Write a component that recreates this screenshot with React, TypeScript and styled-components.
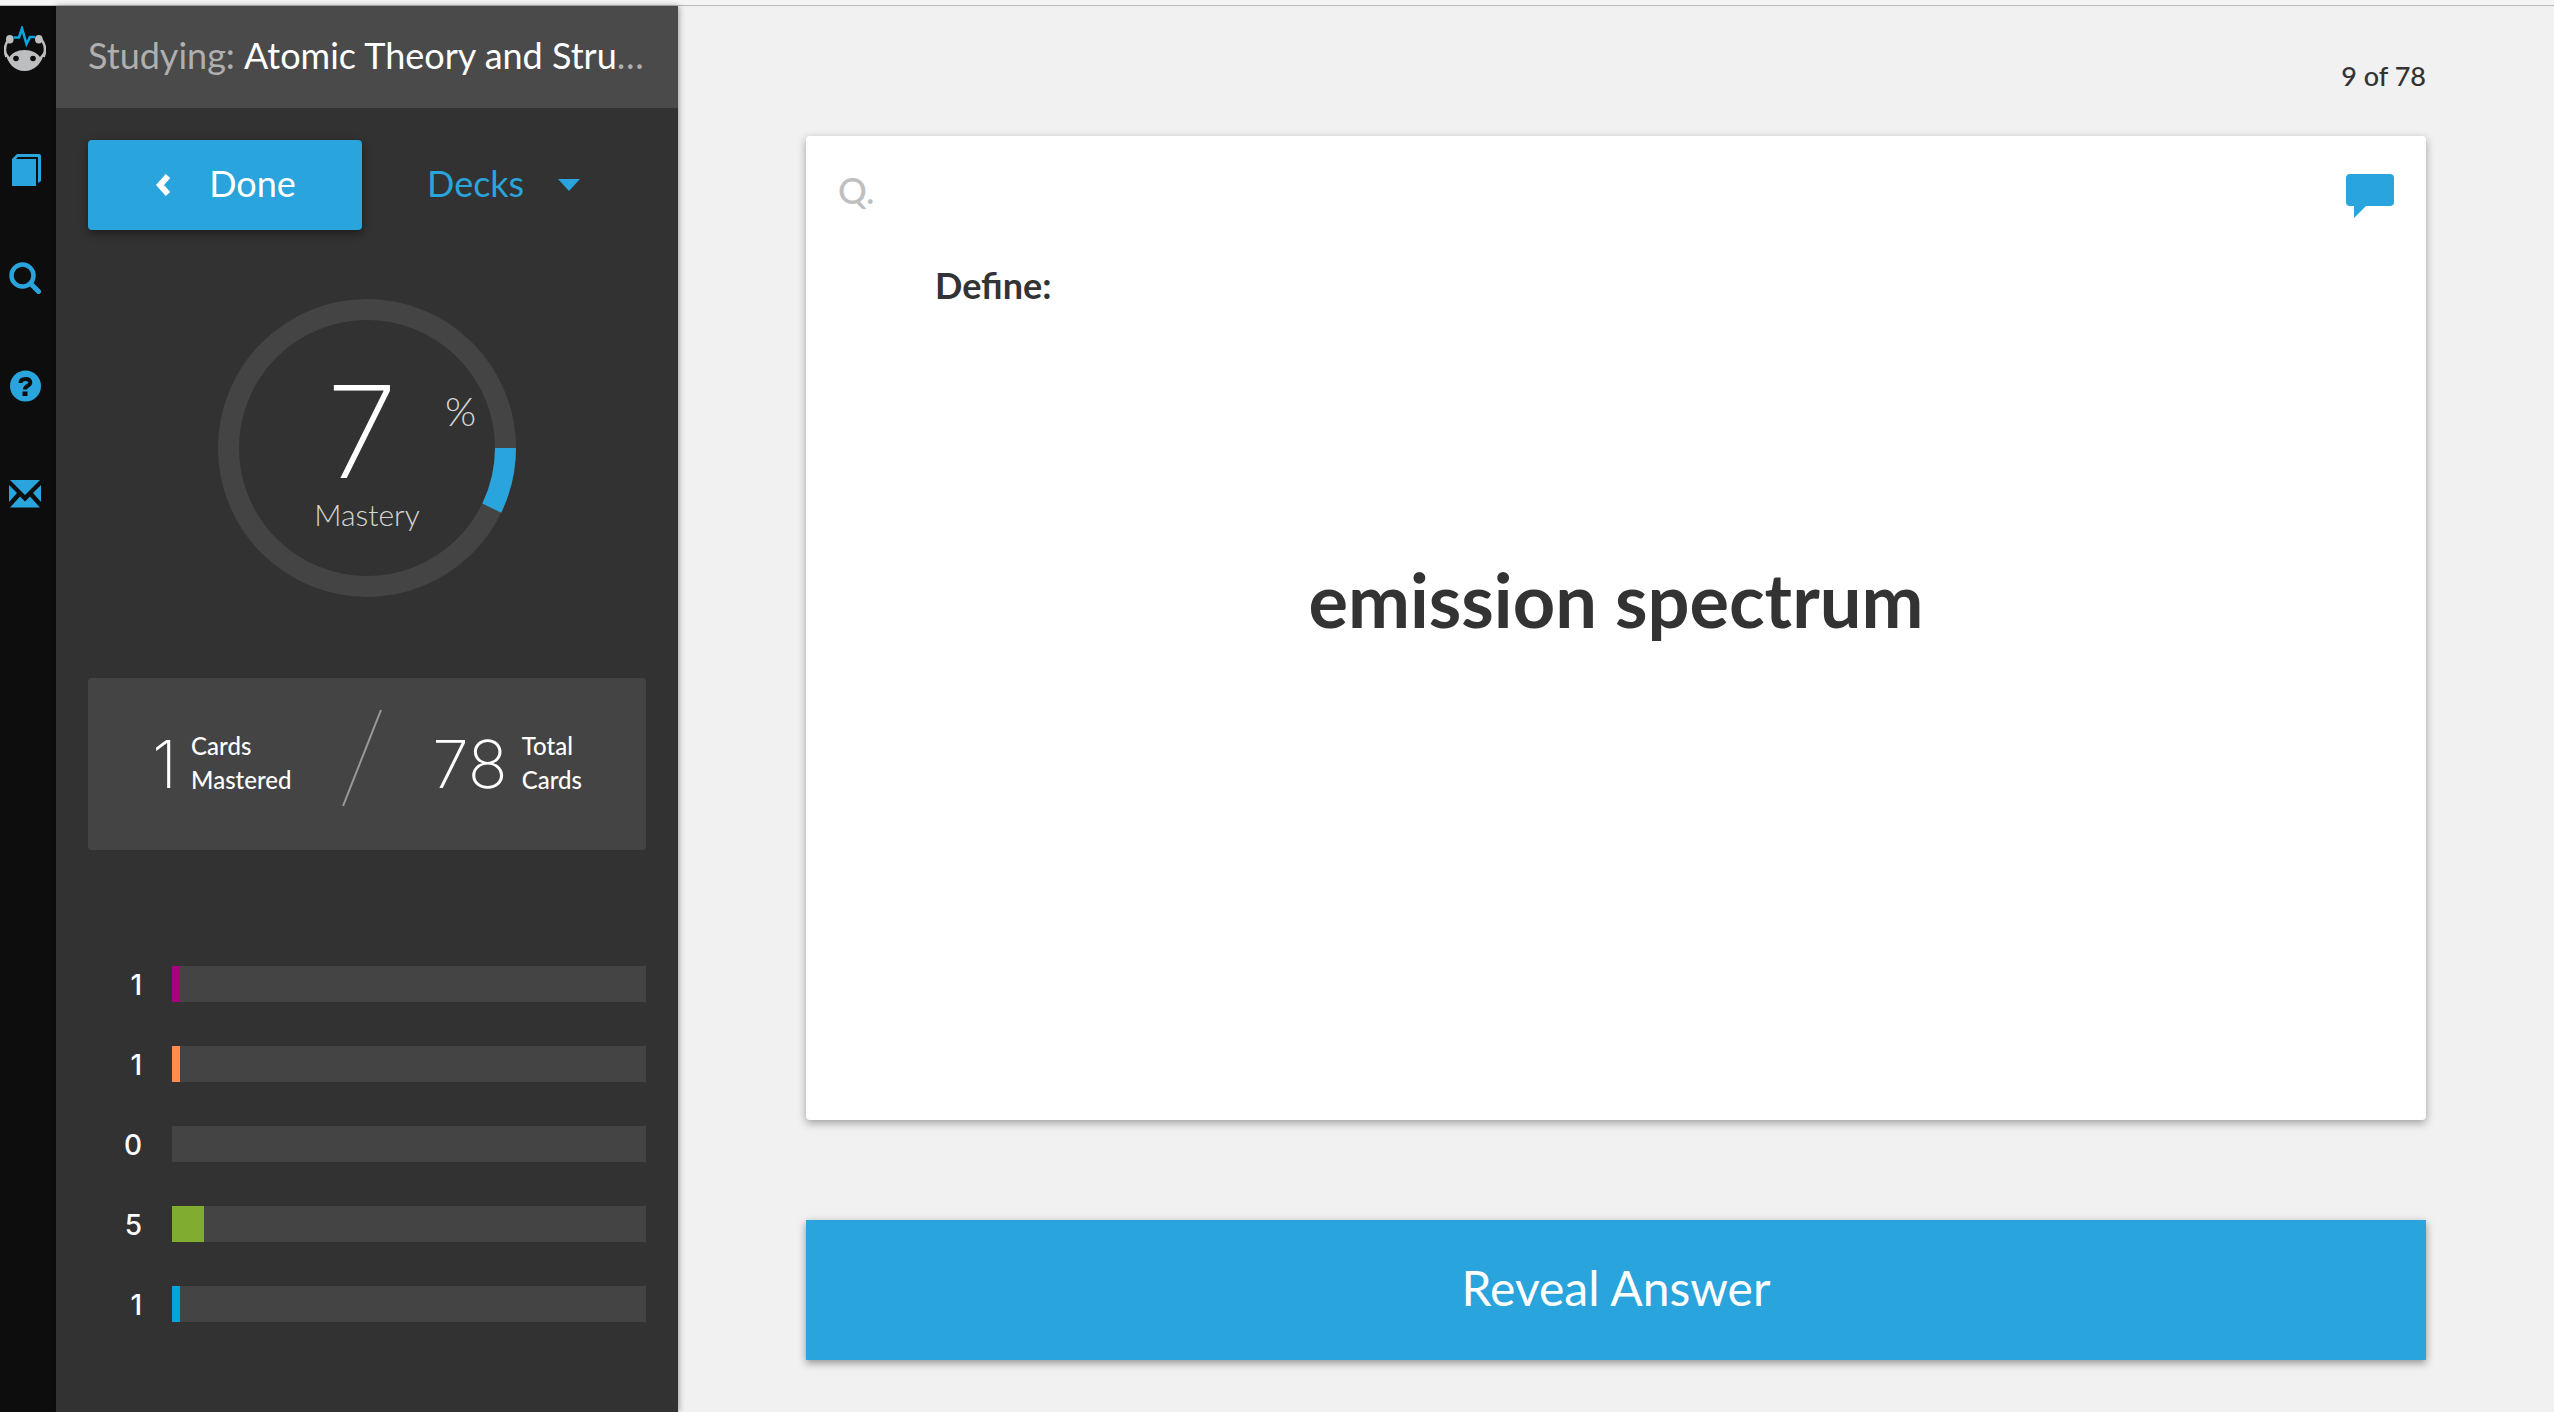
import React from "react";
import styled, { createGlobalStyle } from "styled-components";

const blue = "#29a4dc";
const digits = `Inter, Lato, "Liberation Sans", sans-serif`;

const GlobalStyle = createGlobalStyle`
  *, *::before, *::after { box-sizing: border-box; }
  body { margin: 0; background: #f1f1f1; }
  body, button { font-family: Lato, "Liberation Sans", sans-serif; }
  button { border: 0; padding: 0; margin: 0; background: none; cursor: pointer; }
  h1, h2, p { margin: 0; }
  svg { display: block; }
`;

const Page = styled.div`
  min-height: 100vh;
  display: flex;
  flex-direction: column;
`;

const TopStrip = styled.div`
  height: 6px;
  background: #f5f5f5;
  border-bottom: 1px solid #b9bdb9;
`;

const Columns = styled.div`
  flex: 1;
  display: flex;
`;

const Rail = styled.nav`
  width: 56px;
  flex: none;
  background: #0d0d0d;
  padding: 20px 0 0 4px;
  display: flex;
  flex-direction: column;
  align-items: flex-start;
`;

const LogoLink = styled.a`
  display: block;
  height: 45px;
  margin-bottom: 83px;
`;

const RailLinks = styled.div`
  display: flex;
  flex-direction: column;
  gap: 76px;
  padding-left: 5px;
`;

const RailLink = styled.a`
  display: block;
  width: 32px;
  height: 32px;
  color: ${blue};
`;

const Sidebar = styled.aside`
  width: 622px;
  flex: none;
  background: #323232;
  color: #fff;
  box-shadow: 1px 0 6px rgba(0, 0, 0, 0.35);
  z-index: 1;
`;

const DeckTitle = styled.h1`
  height: 102px;
  padding: 0 32px 4px;
  display: flex;
  align-items: center;
  background: #4a4a4a;
  color: #afafaf;
  font-size: 36px;
  line-height: 44px;
  font-weight: 400;
  white-space: pre;
  span { color: #fff; }
`;

const SidebarBody = styled.div`
  padding: 32px 32px 0;
`;

const Actions = styled.div`
  display: flex;
  gap: 65px;
`;

const DoneButton = styled.button`
  width: 274px;
  height: 90px;
  display: flex;
  align-items: center;
  justify-content: center;
  gap: 38px;
  border-radius: 4px;
  background: ${blue};
  color: #fff;
  font-size: 36px;
  line-height: 44px;
  box-shadow: 0 3px 8px rgba(0, 0, 0, 0.45);
`;

const DecksButton = styled.button`
  height: 90px;
  display: flex;
  align-items: center;
  gap: 34px;
  color: ${blue};
  font-size: 36px;
  line-height: 44px;
`;

const ButtonLabel = styled.span`
  padding-bottom: 4px;
`;

const Ring = styled.div`
  display: grid;
  width: 298px;
  height: 298px;
  margin: 69px auto 0;
  > * { grid-area: 1 / 1; }
`;

const RingText = styled.div`
  display: grid;
  grid-template-columns: 1fr 80px 1fr;
  grid-template-rows: 128px 40px;
  padding-top: 69px;
  justify-items: center;
  align-content: start;
`;

const Score = styled.strong`
  grid-column: 2;
  padding-right: 10px;
  font-family: ${digits};
  font-size: 128px;
  line-height: 128px;
  font-weight: 200;
`;

const Percent = styled.span`
  grid-column: 3;
  font-size: 40px;
  line-height: 48px;
  padding: 19px 2px 0 0;
  font-weight: 300;
  color: #d6d6d6;
`;

const RingLabel = styled.span`
  grid-column: 1 / -1;
  font-size: 30px;
  line-height: 36px;
  font-weight: 300;
  color: #d6d6d6;
`;

const Totals = styled.section`
  height: 172px;
  margin-top: 81px;
  padding: 32px 64px 0;
  border-radius: 4px;
  background: #444;
  display: flex;
  justify-content: space-between;
  align-items: flex-start;
`;

const Total = styled.div`
  display: flex;
  gap: 14px;
  padding-top: 19px;
`;

const TotalNumber = styled.span`
  font-family: ${digits};
  font-size: 66px;
  line-height: 70px;
  font-weight: 200;
`;

const TotalLabel = styled.span`
  font-size: 24px;
  line-height: 34px;
  font-weight: 500;
`;

const Ratings = styled.ul`
  list-style: none;
  margin: 116px 0 0;
  padding: 0;
  display: grid;
  gap: 44px;
`;

const Rating = styled.li`
  display: grid;
  grid-template-columns: 54px 1fr;
  column-gap: 30px;
  height: 36px;
  font-family: ${digits};
  font-size: 28px;
  line-height: 38px;
  font-weight: 500;
  text-align: right;
`;

const Track = styled.div`
  height: 36px;
  background: #444;
`;

const Fill = styled.div<{ $color: string }>`
  height: 100%;
  background: ${(p) => p.$color};
`;

const Main = styled.main`
  flex: 1;
  min-width: 0;
  padding: 52px 128px 52px;
  display: flex;
  flex-direction: column;
  color: #333;
`;

const Progress = styled.p`
  height: 78px;
  text-align: right;
  font-size: 27px;
  line-height: 36px;
  font-weight: 500;
`;

const Card = styled.article`
  flex: 1;
  background: #fff;
  border-radius: 4px;
  box-shadow: 0 3px 8px rgba(0, 0, 0, 0.35);
  padding: 36px 32px;
`;

const CardTop = styled.div`
  display: flex;
  justify-content: space-between;
  height: 76px;
`;

const Side = styled.span`
  font-size: 36px;
  line-height: 36px;
  font-weight: 500;
  color: #bfbfbf;
`;

const CommentButton = styled.button`
  width: 48px;
  height: 46px;
  padding-top: 2px;
`;

const Prompt = styled.p`
  padding: 15px 97px 0;
  font-size: 36px;
  line-height: 44px;
  font-weight: 700;
`;

const Term = styled.h2`
  margin-top: 249px;
  text-align: center;
  font-size: 74px;
  line-height: 88px;
  font-weight: 700;
`;

const RevealButton = styled.button`
  height: 140px;
  margin-top: 100px;
  padding-bottom: 4px;
  background: ${blue};
  color: #fff;
  font-size: 48px;
  line-height: 60px;
  box-shadow: 0 3px 8px rgba(0, 0, 0, 0.4);
`;

const Logo = () => (
  <svg width="42" height="45" viewBox="0 0 42 45" aria-hidden="true">
    <path d="M5 13C1 18 0 25 2.500 31M37 13c4 5 5 12 2.500 18" fill="none" stroke="#bcbec0" strokeWidth="2.600" />
    <ellipse cx="5.800" cy="13.300" rx="3.800" ry="4.200" fill="#bcbec0" />
    <ellipse cx="34.800" cy="13.300" rx="3.800" ry="4.200" fill="#bcbec0" />
    <path fill="#bcbec0" d="M1.200 25C3 37 10 45 20.500 45S38.500 37 40.500 25L36 31C33 27 28 24 20.500 24S8.500 27 5.500 31Z" />
    <circle cx="12" cy="32.500" r="2.800" fill="#0d0d0d" />
    <circle cx="29" cy="32.500" r="2.800" fill="#0d0d0d" />
    <path d="M9.500 11.500H15L18 2.500l4.500 15.500 3.500-7H31" fill="none" stroke="#0aa5de" strokeWidth="2.600" />
  </svg>
);

const BookIcon = () => (
  <svg width="32" height="32" viewBox="0 0 32 32" fill="currentColor" aria-hidden="true">
    <path d="M3 5 8 0h22a2 2 0 0 1 2 2v25l-3 2V3H9L7 5h20v27H3Z" />
  </svg>
);

const SearchIcon = () => (
  <svg width="32" height="32" viewBox="0 0 32 32" fill="none" stroke="currentColor" aria-hidden="true">
    <circle cx="13.500" cy="13.500" r="11" strokeWidth="4.500" />
    <path d="m21.500 21.500 8 8" strokeWidth="5" strokeLinecap="round" />
  </svg>
);

const HelpIcon = () => (
  <svg width="32" height="32" viewBox="0 0 32 32" aria-hidden="true">
    <circle cx="16.500" cy="16" r="15.500" fill="currentColor" />
    <path d="M11.500 13c0-3 2-4 5-4s4.800 1.200 4.800 3.600c0 3.500-5.300 3-5.300 6.900" fill="none" stroke="#0d0d0d" strokeWidth="4" />
    <path d="M13.500 21.500h5V26h-5Z" fill="#0d0d0d" />
  </svg>
);

const MailIcon = () => (
  <svg width="32" height="32" viewBox="0 0 32 32" fill="currentColor" aria-hidden="true">
    <path d="M1 2h30L16 17ZM0 7l8 8-8 9ZM32 7v17l-8-9ZM1 29.500l10-11 5 5 5-5 10 11Z" />
  </svg>
);

const railItems = [
  { name: "Decks", Icon: BookIcon },
  { name: "Search", Icon: SearchIcon },
  { name: "Help", Icon: HelpIcon },
  { name: "Messages", Icon: MailIcon },
];

const ratings = [
  { count: 1, share: 1.7, color: "#a9007f" },
  { count: 1, share: 1.7, color: "#ff8c4b" },
  { count: 0, share: 0, color: "#fc0" },
  { count: 5, share: 6.8, color: "#80ad2f" },
  { count: 1, share: 1.7, color: "#00a5da" },
];

export default function App() {
  return (
    <>
      <GlobalStyle />
      <Page>
        <TopStrip />
        <Columns>
          <Rail>
            <LogoLink href="#" aria-label="Home"><Logo /></LogoLink>
            <RailLinks>
              {railItems.map(({ name, Icon }) => (
                <RailLink key={name} href="#" aria-label={name}><Icon /></RailLink>
              ))}
            </RailLinks>
          </Rail>
          <Sidebar>
            <DeckTitle>Studying: <span>Atomic Theory and Stru</span>…</DeckTitle>
            <SidebarBody>
              <Actions>
                <DoneButton>
                  <svg width="17" height="22" viewBox="0 0 17 22" aria-hidden="true">
                    <path d="M14 2 6 11l8 9" fill="none" stroke="#fff" strokeWidth="6" />
                  </svg>
                  <ButtonLabel>Done</ButtonLabel>
                </DoneButton>
                <DecksButton aria-haspopup="menu">
                  <ButtonLabel>Decks</ButtonLabel>
                  <svg width="22" height="12" viewBox="0 0 22 12" aria-hidden="true">
                    <path d="M0 0h22L11 12Z" fill="currentColor" />
                  </svg>
                </DecksButton>
              </Actions>
              <Ring>
                <svg width="298" height="298" viewBox="0 0 298 298" aria-hidden="true">
                  <circle cx="149" cy="149" r="138.500" fill="none" stroke="#444" strokeWidth="21" />
                  <path d="M287.500 149A138.500 138.500 0 0 1 273.800 209.100" fill="none" stroke={blue} strokeWidth="21" />
                </svg>
                <RingText>
                  <Score>7</Score>
                  <Percent>%</Percent>
                  <RingLabel>Mastery</RingLabel>
                </RingText>
              </Ring>
              <Totals>
                <Total>
                  <TotalNumber>1</TotalNumber>
                  <TotalLabel>Cards<br />Mastered</TotalLabel>
                </Total>
                <svg width="40" height="96" viewBox="0 0 40 96" aria-hidden="true">
                  <path d="M39 0 1 96" stroke="#999" strokeWidth="2" />
                </svg>
                <Total>
                  <TotalNumber>78</TotalNumber>
                  <TotalLabel>Total<br />Cards</TotalLabel>
                </Total>
              </Totals>
              <Ratings>
                {ratings.map((r, i) => (
                  <Rating key={i}>
                    <span>{r.count}</span>
                    <Track><Fill $color={r.color} style={{ width: `${r.share}%` }} /></Track>
                  </Rating>
                ))}
              </Ratings>
            </SidebarBody>
          </Sidebar>
          <Main>
            <Progress>9 of 78</Progress>
            <Card>
              <CardTop>
                <Side>Q.</Side>
                <CommentButton aria-label="Comment">
                  <svg width="48" height="44" viewBox="0 0 48 44" aria-hidden="true">
                    <path d="M4 0h40a4 4 0 0 1 4 4v24a4 4 0 0 1-4 4H20L8 44V32H4a4 4 0 0 1-4-4V4a4 4 0 0 1 4-4Z" fill={blue} />
                  </svg>
                </CommentButton>
              </CardTop>
              <Prompt>Define:</Prompt>
              <Term>emission spectrum</Term>
            </Card>
            <RevealButton>Reveal Answer</RevealButton>
          </Main>
        </Columns>
      </Page>
    </>
  );
}
